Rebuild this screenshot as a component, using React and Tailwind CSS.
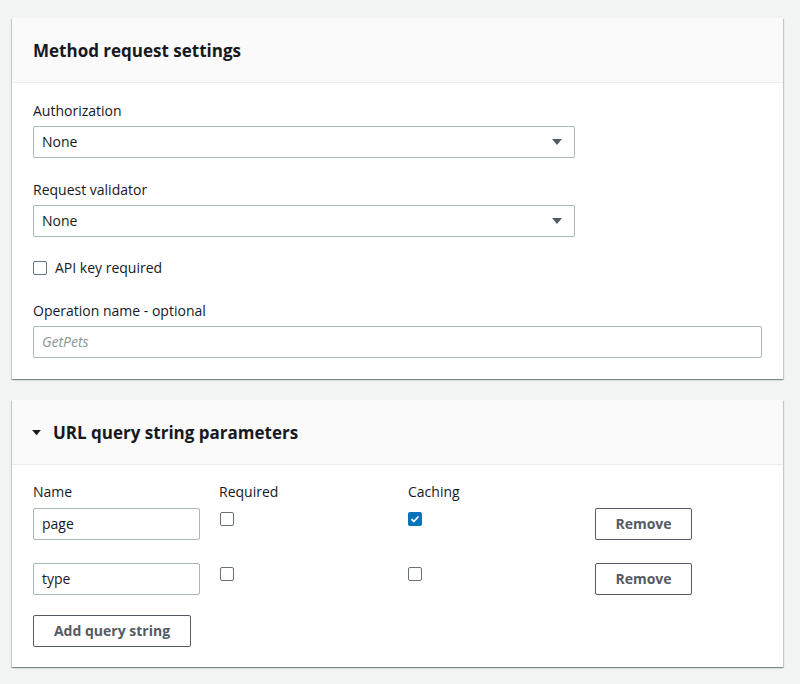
const card = 'bg-white shadow-[0_1px_1px_0_rgba(0,28,36,0.3),1px_1px_1px_0_rgba(0,28,36,0.15),-1px_1px_1px_0_rgba(0,28,36,0.15)]'
const inputBase = 'h-8 border border-[#aab7b8] rounded-[2px] bg-white px-2 text-sm text-[#16191f] flex items-center'

function Caret({ color = '#545b64', w = 12, h = 8 }) {
    return (
        <svg width={w} height={h} viewBox="0 0 12 8" aria-hidden="true">
            <path d="M1 1h10L6 7z" fill={color} />
        </svg>
    )
}

function Select({ value }) {
    return (
        <div className={inputBase + ' w-[542px] justify-between pr-[11px]'}>
            <span>{value}</span>
            <Caret />
        </div>
    )
}

function Checkbox({ checked }) {
    if (checked) {
        return (
            <span className="w-[14px] h-[14px] rounded-[2px] bg-[#0073bb] flex items-center justify-center">
                <svg width="10" height="10" viewBox="0 0 10 10" aria-hidden="true">
                    <path d="M1.5 5.2l2.3 2.3 4.7-5" stroke="white" strokeWidth="1.8" fill="none" />
                </svg>
            </span>
        )
    }
    return <span className="block w-[14px] h-[14px] rounded-[2px] border border-[#687078] bg-white" />
}

function Button({ children, className = '' }) {
    return (
        <button className={'h-8 border border-[#545b64] rounded-[2px] bg-white text-sm font-bold text-[#545b64] ' + className}>
            {children}
        </button>
    )
}

const params = [
    { name: 'page', required: false, caching: true },
    { name: 'type', required: false, caching: false },
]

export default function App() {
    return (
        <div className="min-h-[684px] bg-[#f2f3f3] pl-3 pr-[17px] pt-[18px] pb-4 text-[#16191f]" style={{ fontFamily: '"Open Sans", "Noto Sans", sans-serif' }}>
            <section className={card}>
                <div className="h-[65px] bg-[#fafafa] border-b border-[#eaeded] px-[21px] flex items-center">
                    <h2 className="text-[17px] font-bold leading-none">Method request settings</h2>
                </div>
                <div className="px-[21px] pt-[17px] pb-[21px]">
                    <label className="block text-sm leading-[22px] mb-1">Authorization</label>
                    <Select value="None" />
                    <label className="block text-sm leading-[22px] mt-[21px] mb-1">Request validator</label>
                    <Select value="None" />
                    <div className="flex items-center gap-2 h-[22px] mt-5">
                        <Checkbox />
                        <span className="text-sm">API key required</span>
                    </div>
                    <label className="block text-sm leading-[22px] mt-[21px] mb-1">Operation name - optional</label>
                    <div className={inputBase + ' w-full italic text-[#879596]'}>GetPets</div>
                </div>
            </section>

            <section className={card + ' mt-[21px]'}>
                <div className="h-[65px] bg-[#fafafa] border-b border-[#eaeded] px-[19px] flex items-center gap-[11px]">
                    <Caret color="#16191f" w={11} h={7} />
                    <h2 className="text-[17px] font-bold leading-none">URL query string parameters</h2>
                </div>
                <div className="px-[21px] pt-4 pb-5">
                    <div className="flex text-sm leading-[22px] mb-[5px]">
                        <span className="w-[186px]">Name</span>
                        <span className="w-[189px]">Required</span>
                        <span className="w-[187px]">Caching</span>
                    </div>
                    <div className="flex flex-col gap-[23px]">
                        {params.map((p) => (
                            <div key={p.name} className="flex items-start">
                                <div className="w-[186px]">
                                    <div className={inputBase + ' w-[167px]'}>{p.name}</div>
                                </div>
                                <div className="w-[189px] pt-1 pl-px">
                                    <Checkbox checked={p.required} />
                                </div>
                                <div className="w-[187px] pt-1">
                                    <Checkbox checked={p.caching} />
                                </div>
                                <Button className="w-[97px]">Remove</Button>
                            </div>
                        ))}
                    </div>
                    <Button className="w-[158px] mt-5">Add query string</Button>
                </div>
            </section>
        </div>
    )
}
